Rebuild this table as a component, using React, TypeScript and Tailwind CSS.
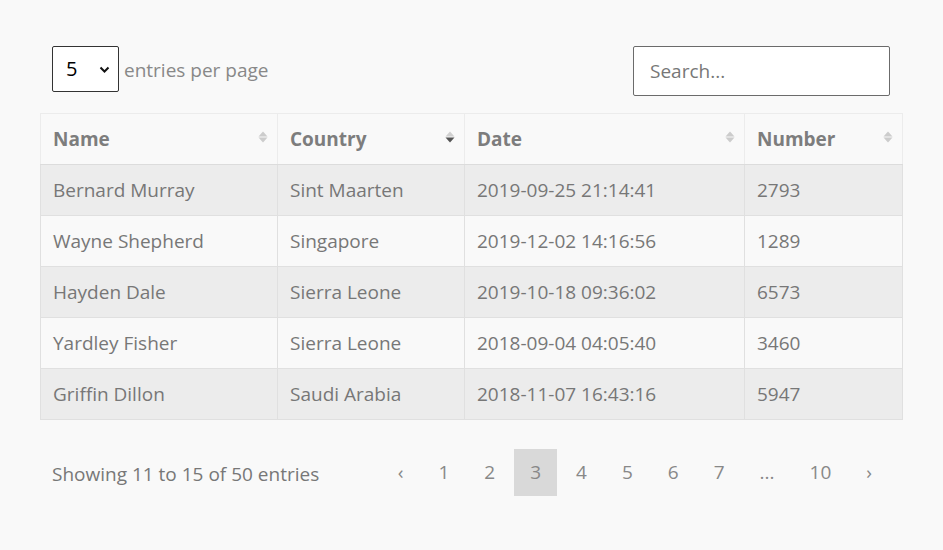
import React from "react";

const rows = [
  ["Bernard Murray", "Sint Maarten", "2019-09-25 21:14:41", "2793"],
  ["Wayne Shepherd", "Singapore", "2019-12-02 14:16:56", "1289"],
  ["Hayden Dale", "Sierra Leone", "2019-10-18 09:36:02", "6573"],
  ["Yardley Fisher", "Sierra Leone", "2018-09-04 04:05:40", "3460"],
  ["Griffin Dillon", "Saudi Arabia", "2018-11-07 16:43:16", "5947"],
];

function SortIcon({ active }: { active?: boolean }) {
  return (
    <svg width="10" height="12" viewBox="0 0 10 12" className="absolute right-[9px] top-[17px]">
      <polygon points="5,0.5 9.5,5.5 0.5,5.5" fill={active ? "#d0d0d0" : "#cccccc"} />
      <polygon points="0.5,6.5 9.5,6.5 5,11.5" fill={active ? "#555555" : "#cccccc"} />
    </svg>
  );
}

const cols = [
  { label: "Name", w: "w-[237px]" },
  { label: "Country", w: "w-[187px]", active: true },
  { label: "Date", w: "w-[280px]" },
  { label: "Number", w: "w-[158px]" },
];

export default function App() {
  return (
    <div
      className="w-[943px] h-[550px] bg-[#f9f9f9] text-[#777777] pt-[46px] px-[40px]"
      style={{ fontFamily: '"Open Sans", "Noto Sans", sans-serif' }}
    >
      <div className="flex items-start justify-between pl-[12px] pr-[13px]">
        <div className="flex items-center h-[46px]">
          <div className="relative w-[67px] h-[46px] border border-[#333333] rounded-[2px] bg-white flex items-center pl-[13px] text-[20px] text-black">
            5
            <svg className="absolute right-[8px] top-[19px]" width="11" height="8" viewBox="0 0 11 8">
              <polyline points="1.5,1.5 5.5,5.5 9.5,1.5" fill="none" stroke="#111" strokeWidth="2" />
            </svg>
          </div>
          <span className="ml-[5px] pt-[3px] text-[19px] text-[#888888]">entries per page</span>
        </div>
        <div className="w-[257px] h-[50px] border border-[#6b6b6b] rounded-[2px] bg-white flex items-center pl-[16px] text-[19px] text-[#777777]">
          Search...
        </div>
      </div>

      <table className="mt-[17px] w-[862px] border-collapse text-[19px] table-fixed">
        <thead>
          <tr className="h-[51px] bg-[#f9f9f9]">
            {cols.map((c) => (
              <th
                key={c.label}
                className={`${c.w} relative border border-[#ececec] border-b-[#dcdcdc] text-left font-bold text-[#7d7d7d] pl-[12px]`}
              >
                {c.label}
                <SortIcon active={c.active} />
              </th>
            ))}
          </tr>
        </thead>
        <tbody>
          {rows.map((r, i) => (
            <tr key={i} className={`h-[51px] ${i % 2 === 0 ? "bg-[#ececec]" : "bg-[#f9f9f9]"}`}>
              {r.map((cell, j) => (
                <td key={j} className="border border-[#e0e0e0] pl-[12px] text-[#777777]">
                  {cell}
                </td>
              ))}
            </tr>
          ))}
        </tbody>
      </table>

      <div className="flex items-center justify-between mt-[29px] pl-[12px] pr-[15px] h-[47px]">
        <span className="pt-[3px] text-[19px] text-[#777777]">Showing 11 to 15 of 50 entries</span>
        <div className="flex items-center text-[19px] text-[#888888] gap-[3px]">
          {["‹", "1", "2", "3", "4", "5", "6", "7", "...", "10", "›"].map((p) => (
            <span
              key={p}
              className={`h-[47px] flex items-center justify-center px-[16px] ${p === "3" ? "bg-[#d9d9d9]" : ""}`}
            >
              {p}
            </span>
          ))}
        </div>
      </div>
    </div>
  );
}
